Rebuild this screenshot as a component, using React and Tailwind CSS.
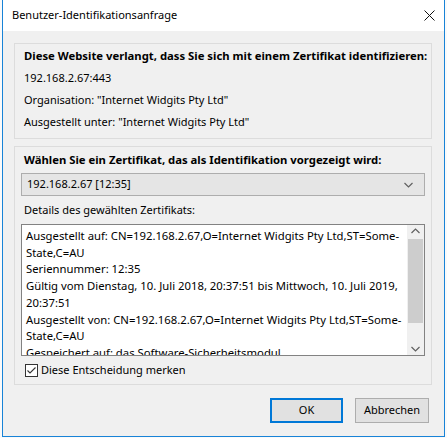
import React from 'react'

const font = { fontFamily: '"Noto Sans", "Liberation Sans", sans-serif' }

const detailLines = [
  'Ausgestellt auf: CN=192.168.2.67,O=Internet Widgits Pty Ltd,ST=Some-',
  'State,C=AU',
  'Seriennummer: 12:35',
  'Gültig vom Dienstag, 10. Juli 2018, 20:37:51 bis Mittwoch, 10. Juli 2019,',
  '20:37:51',
  'Ausgestellt von: CN=192.168.2.67,O=Internet Widgits Pty Ltd,ST=Some-',
  'State,C=AU',
  'Gespeichert auf: das Software-Sicherheitsmodul',
]

const Chevron = ({ up }) => (
  <svg width="9" height="6" viewBox="0 0 9 6" className="block">
    <path d={up ? 'M0.5 5 L4.5 1 L8.5 5' : 'M0.5 1 L4.5 5 L8.5 1'} fill="none" stroke="#606060" strokeWidth="1.2" />
  </svg>
)

const App = () => {
  return (
    <div className="w-[447px] h-[438px] bg-[#fafafa] pl-[2px] overflow-hidden text-[11px] text-black whitespace-nowrap" style={font}>
      <div className="w-[443px] h-[437px] bg-[#f0f0f0] border-x border-b border-[#1883d7] flex flex-col">
        {/* title bar */}
        <div className="h-[31px] bg-white flex items-center justify-between pl-[9px] pr-[9px] shrink-0">
          <span className="text-[11px]">Benutzer-Identifikationsanfrage</span>
          <svg width="11" height="11" viewBox="0 0 11 11">
            <path d="M0.5 0.5 L10.5 10.5 M10.5 0.5 L0.5 10.5" stroke="#111" strokeWidth="1" />
          </svg>
        </div>

        <div className="pl-[11px] pt-[12px]">
          {/* site group */}
          <div className="w-[418px] h-[96px] border border-[#dcdcdc] pl-[9px] pt-[1px]">
            <div className="h-[22px] leading-[22px] font-bold text-[11.3px]">Diese Website verlangt, dass Sie sich mit einem Zertifikat identifizieren:</div>
            <div className="h-[22px] leading-[22px]">192.168.2.67:443</div>
            <div className="h-[22px] leading-[22px]">Organisation: "Internet Widgits Pty Ltd"</div>
            <div className="h-[22px] leading-[22px]">Ausgestellt unter: "Internet Widgits Pty Ltd"</div>
          </div>

          {/* certificate group */}
          <div className="mt-[7px] w-[418px] h-[239px] border border-[#dcdcdc] pt-[2px]">
            <div className="h-[22px] leading-[22px] font-bold text-[11.3px] pl-[9px]">Wählen Sie ein Zertifikat, das als Identifikation vorgezeigt wird:</div>
            <div className="ml-[6px] mt-[2px] w-[404px] h-[23px] bg-[#e5e5e5] border border-[#adadad] flex items-center justify-between pl-[5px] pr-[11px]">
              <span>192.168.2.67 [12:35]</span>
              <Chevron />
            </div>
            <div className="mt-[3px] h-[22px] leading-[22px] pl-[9px]">Details des gewählten Zertifikats:</div>
            <div className="ml-[6px] mt-[3px] w-[404px] h-[132px] bg-white border border-[#828282] flex">
              <div className="flex-1 overflow-hidden pl-[4px] pt-[3px] leading-[16.7px] text-[11.3px]">
                {detailLines.map((l, i) => (
                  <div key={i}>{l}</div>
                ))}
              </div>
              <div className="w-[17px] bg-[#f0f0f0] flex flex-col">
                <div className="h-[17px] flex items-center justify-center"><Chevron up /></div>
                <div className="flex-1 px-[1px] pt-[1px] pb-[20px]">
                  <div className="h-[84px] bg-[#cdcdcd]" />
                </div>
                <div className="h-[17px] flex items-center justify-center"><Chevron /></div>
              </div>
            </div>
            <div className="mt-[8px] ml-[10px] flex items-center h-[13px]">
              <div className="w-[13px] h-[13px] bg-white border border-[#333] flex items-center justify-center">
                <svg width="11" height="11" viewBox="0 0 11 11">
                  <path d="M1.5 5.5 L4 8 L9.5 2.5" fill="none" stroke="#333" strokeWidth="1.1" />
                </svg>
              </div>
              <span className="ml-[3px]">Diese Entscheidung merken</span>
            </div>
          </div>
        </div>

        {/* buttons */}
        <div className="flex justify-end gap-[12px] pr-[15px] mt-[13px]">
          <button className="w-[73px] h-[25px] bg-[#e1e1e1] border-2 border-[#0078d7]">OK</button>
          <button className="w-[74px] h-[25px] bg-[#e1e1e1] border border-[#adadad]">Abbrechen</button>
        </div>
      </div>
    </div>
  )
}

export default App
